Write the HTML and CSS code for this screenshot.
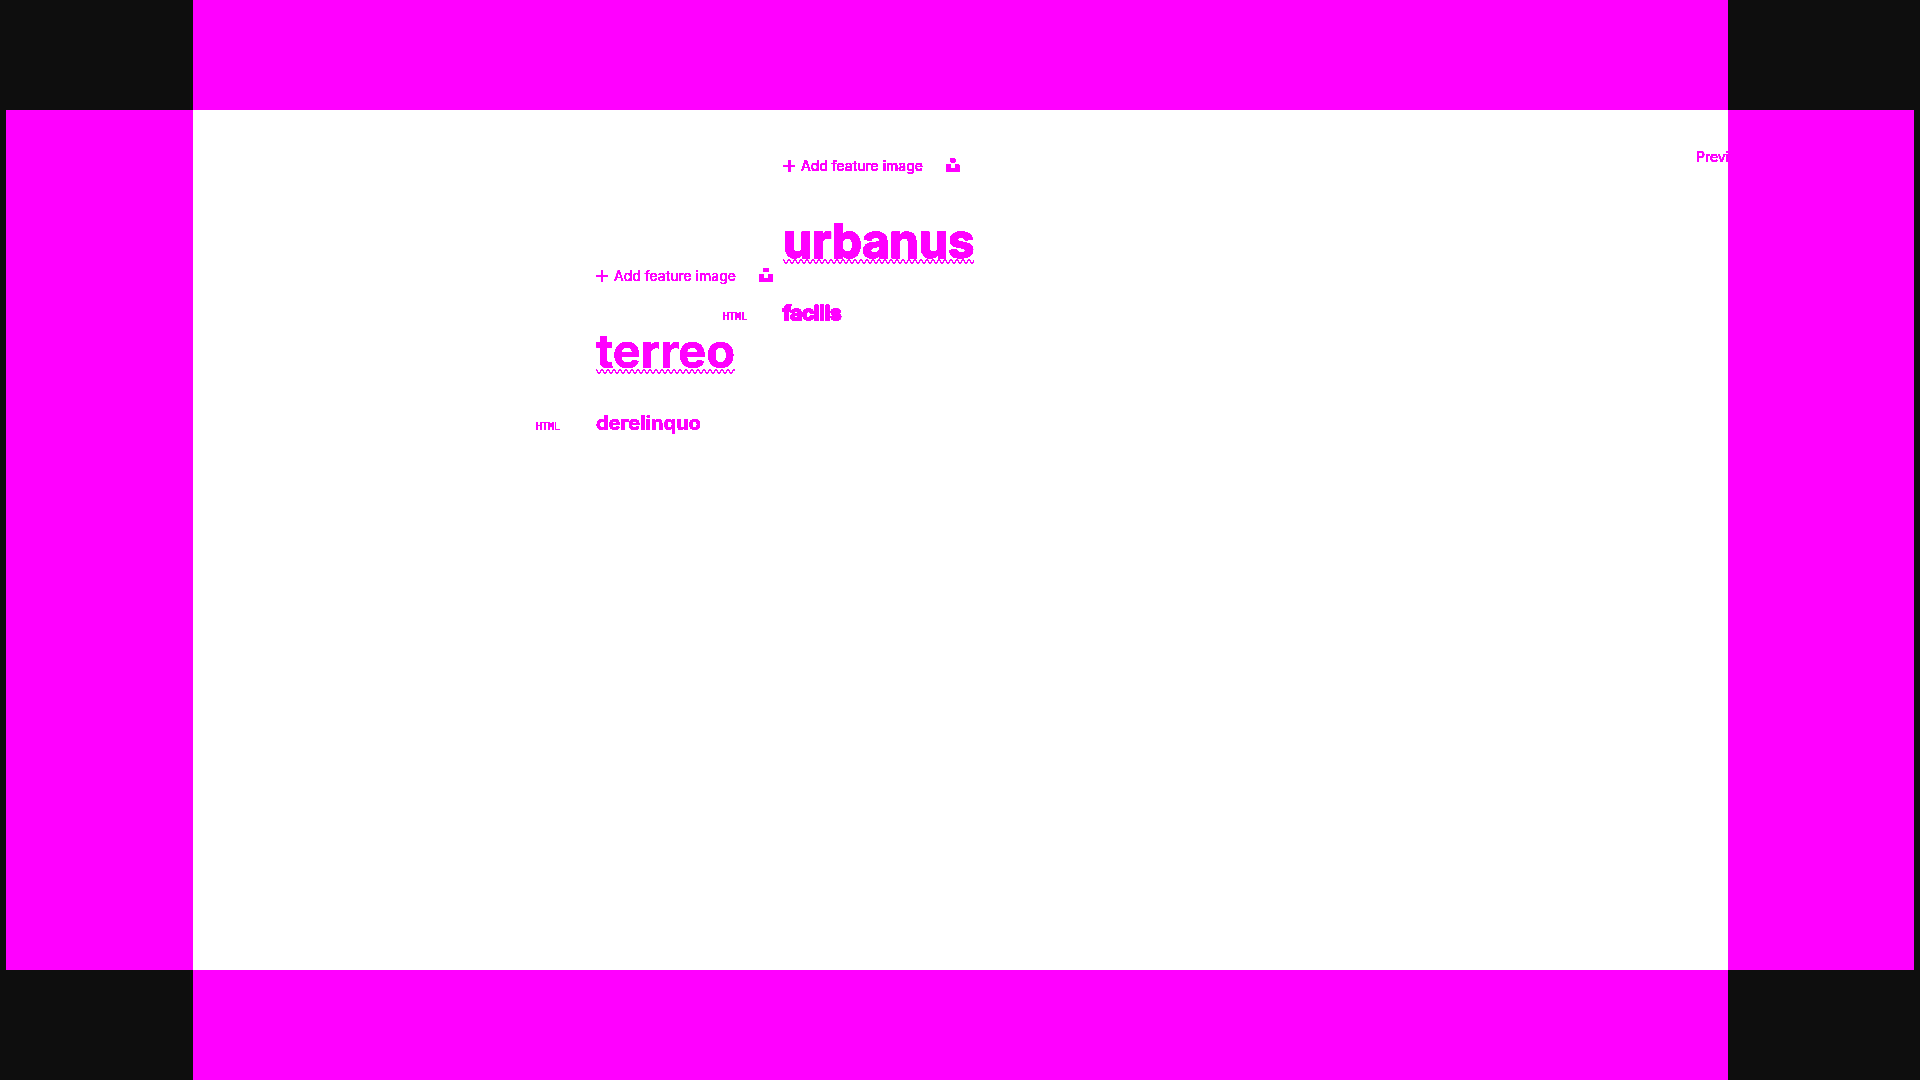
FILE: index.html
```
<!DOCTYPE html>
<html lang="en">
<head>
<meta charset="utf-8">
<title>Post editor</title>
<link rel="stylesheet" href="styles.css">
</head>
<body>
<svg class="defs" aria-hidden="true">
  <filter id="crisp" color-interpolation-filters="sRGB"><feComponentTransfer><feFuncA type="linear" slope="20" intercept="-2"/></feComponentTransfer></filter>
  <filter id="crisp-bold" color-interpolation-filters="sRGB"><feComponentTransfer><feFuncA type="linear" slope="40" intercept="-1"/></feComponentTransfer></filter>
  <symbol id="plus" viewBox="0 0 12 12"><path d="M6 0v12M0 6h12" fill="none" stroke="currentColor" stroke-width="2"/></symbol>
  <symbol id="plus-bold" viewBox="0 0 12 12"><path d="M5 0h3v12H5zM0 5h12v2H0z" fill="currentColor"/></symbol>
  <symbol id="unsplash" viewBox="0 0 14 14"><path d="M4 0h6v4H4zM0 6h5v4h4V6h5v8H0z" fill="currentColor"/></symbol>
  <symbol id="unsplash-round" viewBox="0 0 14 14"><path d="M4 0h5v1h1v3H9v1H5V4H4zM0 6h5v4h4V6h4v1h1v7H0z" fill="currentColor"/></symbol>
</svg>
<div class="frame">
  <div class="band top"></div>
  <div class="band left"></div>
  <main class="stage">
    <article class="post shifted">
      <div class="feature">
        <button class="add" type="button"><svg class="plus"><use href="#plus-bold"/></svg><span>Add feature image</span></button>
        <button class="unsplash" type="button" aria-label="Unsplash"><svg><use href="#unsplash-round"/></svg></button>
      </div>
      <h1><span class="title">urbanus</span></h1>
      <div class="card"><span class="kind">HTML</span><p>facilis</p></div>
    </article>
    <article class="post">
      <div class="feature">
        <button class="add" type="button"><svg class="plus"><use href="#plus"/></svg><span>Add feature image</span></button>
        <button class="unsplash" type="button" aria-label="Unsplash"><svg><use href="#unsplash"/></svg></button>
      </div>
      <h1><span class="title">terreo</span></h1>
      <div class="card"><span class="kind">HTML</span><p>derelinquo</p></div>
    </article>
    <button class="preview" type="button">Previ</button>
  </main>
  <div class="band right"></div>
  <div class="band bottom"></div>
</div>
</body>
</html>
```

FILE: styles.css
```
* { box-sizing: border-box; }
body {
  margin: 0;
  background: #0e0e0e;
  color: #f0f;
  font-family: Inter, "Liberation Sans", sans-serif;
}
.defs { display: none; }
.frame {
  display: grid;
  grid-template-columns: 193px 1fr 192px;
  grid-template-rows: 110px 1fr 110px;
  min-height: 100vh;
}
.band { background: #f0f; }
.top, .bottom { grid-column: 2; }
.left { grid-column: 1; margin-left: 6px; }
.right { margin-right: 6px; }
.stage {
  display: grid;
  align-items: start;
  background: #fff;
  overflow: hidden;
}
.stage > * { grid-area: 1 / 1; }
.post { padding: 156px 0 0 343px; filter: url(#crisp); }
.shifted { padding: 46px 0 0 530px; filter: url(#crisp-bold); }
button {
  border: 0;
  padding: 0;
  background: none;
  color: inherit;
  font: 400 14px/20px Inter, "Liberation Sans", sans-serif;
}
.feature {
  display: flex;
  gap: 23px;
  align-items: center;
  height: 20px;
  padding-left: 60px;
}
.add { display: flex; align-items: center; gap: 6px; }
.plus { width: 12px; height: 12px; }
.unsplash { padding-bottom: 2px; }
.unsplash svg { display: block; width: 14px; height: 14px; }
h1 {
  display: flex;
  margin: 42px 0 0 60px;
  font-size: 47px;
  line-height: 46px;
  font-weight: 700;
}
.shifted h1, .shifted p { -webkit-text-stroke: 1px #f0f; }
.title {
  background: url("data:image/svg+xml,%3Csvg xmlns='http://www.w3.org/2000/svg' width='6' height='5'%3E%3Cpath d='M0 1C2 1 1 4 3 4S4 1 6 1' fill='none' stroke='%23f0f' stroke-width='1'/%3E%3C/svg%3E") left bottom / 6px 5px repeat-x;
}
.card { display: flex; align-items: baseline; margin-top: 34px; }
.card p {
  margin: 0;
  font-size: 20px;
  line-height: 30px;
  font-weight: 700;
}
.kind {
  width: 60px;
  font: 400 10px/12px "DejaVu Sans Mono", monospace;
}
.preview {
  justify-self: end;
  width: 32px;
  margin-top: 37px;
  overflow: hidden;
  text-align: left;
  white-space: nowrap;
  filter: url(#crisp-bold);
}
```
